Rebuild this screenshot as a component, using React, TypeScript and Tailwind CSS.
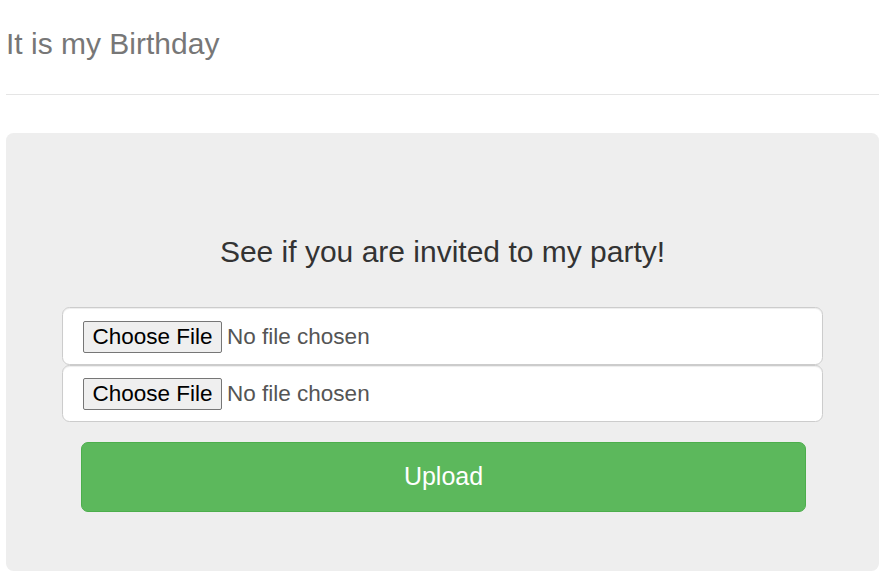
const fileInput =
  "block h-[57.5px] w-full rounded-[7.5px] border border-[#ccc] bg-white px-[20px] py-[12.5px] text-[22.5px] leading-[30px] text-[#555] shadow-[inset_0_1px_1px_rgba(0,0,0,0.075)] file:mr-[5px] file:h-[32px] file:rounded-[2px] file:border file:border-solid file:border-[#767676] file:bg-[#efefef] file:px-[8.5px] file:text-[22.5px] file:leading-[28px] file:text-black";

export default function App() {
  return (
    <div className="min-h-screen bg-white pl-[6px] pr-[1px] font-['Liberation_Sans',Arial,sans-serif]">
      <div className="border-b border-[#e5e5e5] pb-[34px]">
        <h3 className="mt-[27px] text-[30px] leading-[33px] text-[#777]">It is my Birthday</h3>
      </div>

      <div className="mt-[38px] rounded-[7.5px] bg-[#eee] px-[56px] pb-[59px] pt-[102px]">
        <h3 className="text-center text-[30px] leading-[33px] text-[#333]">
          See if you are invited to my party!
        </h3>

        <form className="mt-[39px] flex flex-col" onSubmit={(e) => e.preventDefault()}>
          <input type="file" className={fileInput} />
          <input type="file" className={fileInput} />
          <button
            type="submit"
            className="ml-[19px] mr-[17px] mt-[20px] h-[70px] rounded-[7px] border border-[#4cae4c] bg-[#5cb85c] text-[25px] text-white"
          >
            Upload
          </button>
        </form>
      </div>
    </div>
  );
}
